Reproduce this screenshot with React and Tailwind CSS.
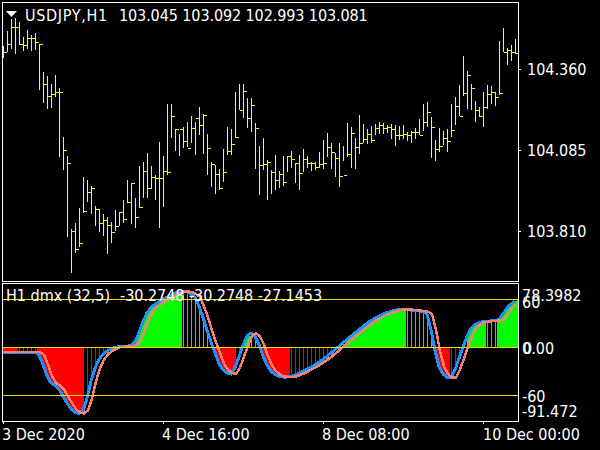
// USDJPY H1 chart with the dmx indicator window
const FONT = "font-['DejaVu_Sans_Condensed','DejaVu_Sans',sans-serif]";

// [high, low, close] in page pixels, one bar every 4px starting at x=3
const bars = [
  [46,58,52],[31,52,44],[19,49,27],[18,54,27],[22,45,44],[37,51,45],[30,49,38],[35,51,38],[33,50,42],[44,90,44],
  [72,103,84],[76,109,96],[84,108,94],[75,97,92],[88,157,92],[137,170,150],[156,237,163],[229,273,231],[223,253,249],[208,247,243],
  [177,213,211],[180,202,192],[186,214,188],[206,226,209],[209,232,223],[214,236,220],[217,254,225],[222,243,232],[210,231,226],[212,226,212],
  [200,223,219],[180,203,202],[183,224,183],[198,228,217],[166,208,207],[162,198,171],[153,198,188],[166,189,177],[175,200,178],[142,228,178],
  [156,207,171],[104,175,172],[104,138,116],[129,151,129],[134,156,129],[127,148,141],[122,147,148],[116,143,128],[122,155,118],[107,135,125],
  [114,154,115],[134,175,148],[162,187,164],[165,194,174],[169,190,188],[149,182,172],[127,155,151],[129,155,144],[92,138,137],[84,110,110],
  [84,118,91],[98,128,118],[98,132,105],[123,169,128],[146,195,165],[138,170,164],[160,200,162],[170,194,172],[155,190,180],[171,188,174],
  [156,186,182],[156,172,156],[151,168,159],[163,183,163],[155,190,173],[149,172,159],[156,168,163],[162,171,163],[162,170,167],[152,168,164],
  [140,169,163],[133,157,147],[143,169,152],[153,177,158],[143,187,176],[146,161,175],[123,157,154],[127,168,133],[138,169,147],[115,154,143],
  [124,143,139],[129,144,134],[126,143,140],[124,135,128],[122,134,125],[123,134,128],[125,133,127],[124,139,129],[125,146,135],[126,140,135],
  [125,139,134],[132,141,135],[131,143,132],[128,139,132],[119,135,135],[104,131,122],[102,127,112],[117,158,127],[140,161,149],[128,152,146],
  [131,145,138],[129,152,141],[104,137,130],[97,125,106],[85,116,116],[56,96,93],[71,109,75],[84,110,88],[101,122,110],[107,117,116],
  [92,127,107],[85,109,94],[86,104,92],[92,106,97],[41,95,93],[28,52,52],[48,65,50],[45,61,52],[39,54,53],
];

const bluePts = [
  [3,352],[36,352],[40,355],[45,371],[50,383],[58,387],[65,400],[73,412],[80,414],[85,408],[90,384],[97,362],[105,352],[115,347],
  [130,346],[135,343],[140,330],[145,316],[150,308],[160,301],[175,293],[185,291],[195,296],[202,314],[210,340],[213,347],[220,367],
  [228,374],[232,375],[238,360],[243,345],[247,335],[252,332],[258,341],[265,362],[272,373],[280,377],[290,377],[300,373],[315,365],
  [325,358],[337,348],[345,341],[360,329],[370,321],[385,313],[400,309],[420,311],[428,313],[432,336],[436,356],[440,371],[447,378],
  [452,378],[457,364],[462,350],[467,336],[472,326],[480,322],[500,320],[505,310],[512,303],[517,300],
];

const interp = (pts, x) => {
  if (x <= pts[0][0]) return pts[0][1];
  for (let i = 1; i < pts.length; i++) {
    if (x <= pts[i][0]) {
      const [x0, y0] = pts[i - 1];
      const [x1, y1] = pts[i];
      return y0 + ((y1 - y0) * (x - x0)) / (x1 - x0);
    }
  }
  return pts[pts.length - 1][1];
};

// soften the corners of the hand-read curve
const blueAt = (x) => (interp(bluePts, x - 2) + interp(bluePts, x) * 2 + interp(bluePts, x + 2)) / 4;

// solid stretches of the histogram, everything else gets a thin bar every 4px
const solid = [[3,17],[37,82],[135,181],[212,234],[241,249],[262,289],[345,405],[433,449],[467,485],[497,517]];
const isSolid = (x) => solid.some(([a, b]) => x >= a && x <= b);

const xs = Array.from({ length: 515 }, (_, i) => i + 3);
const steps = xs.filter((x) => (x - 3) % 4 === 0);
const blueLine = steps.map((x) => `${x},${blueAt(x)}`).join(" ");
const salmonLine = steps.map((x) => `${x + 1},${blueAt(x - 4)}`).join(" ");

function PriceChart() {
  return (
    <svg width="515" height="278" viewBox="3 3 515 278" shapeRendering="crispEdges" className="block">
      {bars.map(([high, low, close], i) => {
        const x = 3 + i * 4;
        const open = i > 0 ? bars[i - 1][2] : close;
        return (
          <g key={i} fill="#ffff00">
            <rect x={x} y={high} width="1" height={low - high} />
            <rect x={x - 2} y={open} width="2" height="1" />
            <rect x={x + 1} y={close} width="2" height="1" />
          </g>
        );
      })}
    </svg>
  );
}

function DmxChart() {
  return (
    <svg width="515" height="137" viewBox="3 284 515 137" shapeRendering="crispEdges" className="block">
      {xs.map((x) => {
        if (!isSolid(x) && (x - 3) % 4 !== 0) return null;
        const y = blueAt(x);
        const up = y < 347;
        return (
          <rect
            key={x}
            x={x}
            y={up ? y : 347}
            width="1"
            height={Math.abs(y - 347)}
            fill={up ? "#00ff00" : "#ff0000"}
          />
        );
      })}
      <polyline points={blueLine} fill="none" stroke="#1e90ff" strokeWidth="3" />
      <polyline points={salmonLine} fill="none" stroke="#fa8072" strokeWidth="2.5" />
      <rect x="3" y="299" width="515" height="1" fill="#ffd700" />
      <rect x="3" y="347" width="515" height="1" fill="#ffd700" />
      <rect x="3" y="395" width="515" height="1" fill="#ffd700" />
    </svg>
  );
}

function PriceLabel({ children }) {
  return (
    <div className="flex items-center h-4 leading-4">
      <div className="w-[2px] h-px bg-white" />
      <span className="ml-[6px] pt-[2px]">{children}</span>
    </div>
  );
}

function TimeCell({ label, inset = "ml-[2px]" }) {
  return (
    <div className="flex flex-col w-40 shrink-0">
      <div className="w-px h-[3px] ml-[3px] bg-white" />
      <span className={`mt-[3px] leading-4 whitespace-nowrap ${inset}`}>{label}</span>
    </div>
  );
}

export default function App() {
  return (
    <div className={`w-[600px] h-[450px] bg-black text-white text-base overflow-hidden ${FONT}`}>
      {/* price window */}
      <div className="flex pt-[2px] pl-[2px] h-[282px]">
        <div className="relative w-[517px] h-[280px] border border-white">
          <PriceChart />
          <div className="absolute left-[3px] top-[5px] flex items-center whitespace-nowrap leading-4">
            <svg width="12" height="6" viewBox="0 0 12 6" className="-mt-[4px]">
              <polygon points="0,0 11,0 5.5,6" fill="#fff" />
            </svg>
            <span className="ml-[7px] tracking-[0.7px]">USDJPY,H1</span>
            <span className="ml-[11px] tracking-[-0.1px]">103.045 103.092 102.993 103.081</span>
          </div>
        </div>
        <div className="flex flex-col gap-[65px] pt-[59px]">
          <PriceLabel>104.360</PriceLabel>
          <PriceLabel>104.085</PriceLabel>
          <PriceLabel>103.810</PriceLabel>
        </div>
      </div>

      {/* indicator window */}
      <div className="flex pl-[2px] pt-[1px] h-[139px]">
        <div className="relative w-[517px] h-[139px] border border-white">
          <DmxChart />
          <div className="absolute left-[3px] top-[4px] flex leading-4 whitespace-nowrap">
            <span>H1 dmx (32,5)</span>
            <span className="ml-[10px] tracking-[-0.05px]">-30.2748 -30.2748 -27.1453</span>
          </div>
        </div>
        <div className="flex flex-col pt-[5px] pl-[3px] leading-4">
          <span>78.3982</span>
          <span className="-mt-[9px]">60</span>
          <span className="relative mt-[30px]">
            0.00
            <span className="absolute left-[1px] top-0">0</span>
          </span>
          <span className="mt-[32px]">-60</span>
          <span className="-mt-[1px]">-91.472</span>
        </div>
      </div>

      {/* time axis */}
      <div className="flex h-[28px]">
        <TimeCell label="3 Dec 2020" />
        <TimeCell label="4 Dec 16:00" />
        <TimeCell label="8 Dec 08:00" />
        <TimeCell label="10 Dec 00:00" inset="ml-[3px]" />
      </div>
    </div>
  );
}
